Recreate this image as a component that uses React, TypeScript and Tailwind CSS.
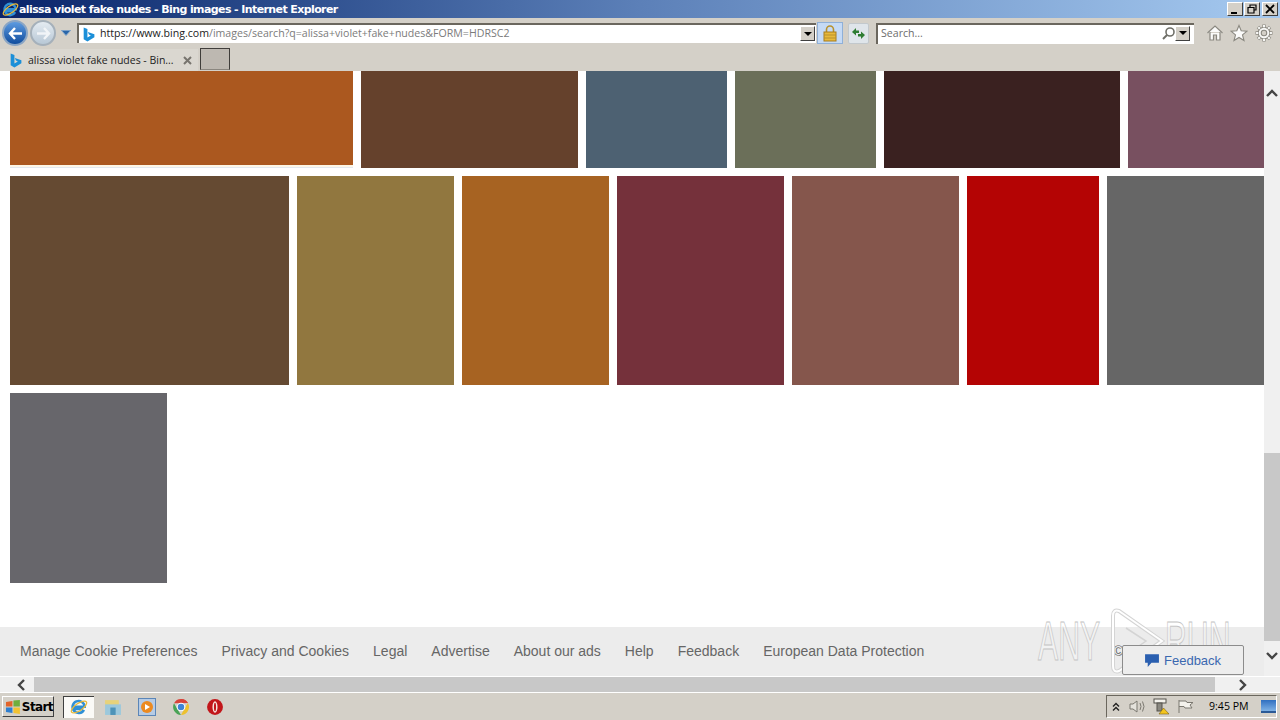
import React from 'react';

const rowOne = [
  { w: 'w-[217px]', c: 'bg-[#65412c]' },
  { w: 'w-[141px]', c: 'bg-[#4d6172]' },
  { w: 'w-[141px]', c: 'bg-[#6b6f59]' },
  { w: 'w-[236px]', c: 'bg-[#3a2120]' },
  { w: 'w-[136px]', c: 'bg-[#785060]' },
];

const rowTwo = [
  { w: 'w-[279px]', c: 'bg-[#654a32]' },
  { w: 'w-[157px]', c: 'bg-[#91773f]' },
  { w: 'w-[147px]', c: 'bg-[#a76322]' },
  { w: 'w-[167px]', c: 'bg-[#75313b]' },
  { w: 'w-[167px]', c: 'bg-[#85564c]' },
  { w: 'w-[132px]', c: 'bg-[#b40404]' },
  { w: 'w-[157px]', c: 'bg-[#666666]' },
];

const footerLinks = [
  'Manage Cookie Preferences',
  'Privacy and Cookies',
  'Legal',
  'Advertise',
  'About our ads',
  'Help',
  'Feedback',
  'European Data Protection',
];

const BingMark = ({ size = 16 }: { size?: number }) => (
  <svg width={size} height={size} viewBox="0 0 14 14">
    <path d="M2.5 0.5 L6 1.8 V9.8 L9.2 8 L7.4 7 L6.4 4.6 L12.5 6.7 V9.6 L6 13.5 L2.5 11.5 Z" fill="#1b8fd8" />
  </svg>
);

const IeLogo = ({ size = 18 }: { size?: number }) => (
  <svg width={size} height={size} viewBox="0 0 18 18">
    <path d="M13.9 11.8 A6 6 0 1 1 14.6 8.8 H4 M4 11 H13" fill="none" stroke="#2f8fd6" strokeWidth="2.6" />
    <ellipse cx="9" cy="9" rx="9" ry="3.6" transform="rotate(-35 9 9)" fill="none" stroke="#e8b93a" strokeWidth="1.3" />
  </svg>
);

const NavButton = ({ active }: { active?: boolean }) => (
  <div className={`w-[26px] h-[26px] rounded-full border-2 flex items-center justify-center bg-gradient-to-b ${active ? 'from-[#5d9be0] to-[#0f4d9e] border-[#8aa5c4]' : 'from-[#e4ebf1] to-[#b8c8d6] border-[#a5b0ba]'}`}>
    <svg width="15" height="13" viewBox="0 0 15 13">
      <path
        d={active ? 'M7 1 L2 6.5 L7 12 M2.5 6.5 H14' : 'M8 1 L13 6.5 L8 12 M12.5 6.5 H1'}
        fill="none"
        stroke={active ? '#ffffff' : '#f1f4f7'}
        strokeWidth="2.4"
      />
    </svg>
  </div>
);

const DropButton = () => (
  <div className="w-[15px] h-[15px] bg-[#d4d0c8] border-t border-l border-t-white border-l-white border-r border-b border-r-[#404040] border-b-[#404040] flex items-center justify-center">
    <div className="w-0 h-0 border-l-[4px] border-r-[4px] border-t-[4px] border-l-transparent border-r-transparent border-t-black" />
  </div>
);

const WinButton = ({ children }: { children: React.ReactNode }) => (
  <div className="w-[16px] h-[14px] bg-[#d4d0c8] border-t border-l border-t-white border-l-white border-r border-b border-r-[#404040] border-b-[#404040] flex items-center justify-center">
    {children}
  </div>
);

const TitleBar = () => (
  <div className="h-[18px] shrink-0 flex items-center justify-between bg-gradient-to-r from-[#0a246a] via-[#5c80b8] to-[#a6caf0] pl-[2px] pr-[2px]">
    <div className="flex items-center">
      <IeLogo size={17} />
      <span className="text-[11px] font-bold text-white leading-none font-['DejaVu_Sans'] tracking-[-0.6px]">alissa violet fake nudes - Bing images - Internet Explorer</span>
    </div>
    <div className="flex items-center">
      <WinButton>
        <div className="w-[6px] h-[2px] bg-black mt-[7px] mr-[2px]" />
      </WinButton>
      <div className="w-[1px]" />
      <WinButton>
        <svg width="10" height="10" viewBox="0 0 10 10">
          <path d="M3 3 V1 H9 V6 H7 M1 3.5 H7 V9 H1 Z" fill="none" stroke="#000" strokeWidth="1.2" />
        </svg>
      </WinButton>
      <div className="w-[2px]" />
      <WinButton>
        <svg width="10" height="10" viewBox="0 0 10 10">
          <path d="M1 1 L9 9 M9 1 L1 9" fill="none" stroke="#000" strokeWidth="1.8" />
        </svg>
      </WinButton>
    </div>
  </div>
);

const Toolbar = () => (
  <div className="h-[30px] shrink-0 bg-[#d4d0c8] flex items-center pl-[2px] relative">
    <NavButton active />
    <div className="ml-[2px]">
      <NavButton />
    </div>
    <svg className="ml-[5px]" width="10" height="6" viewBox="0 0 10 6">
      <path d="M0.5 0.5 H9.5 L5 5.5 Z" fill="#2a66a8" stroke="#7aa0c8" />
    </svg>
    <div className="ml-[6px] w-[739px] h-[20px] bg-white border-t-2 border-l-2 border-t-[#6b675e] border-l-[#6b675e] flex items-center relative">
      <div className="ml-[2px]">
        <BingMark size={15} />
      </div>
      <span className="ml-[4px] -mt-[2px] text-[10.6px] leading-none whitespace-nowrap font-['Open_Sans'] text-[#7b7b7b]">
        <span className="text-[#222222]">https://</span>
        <span className="text-[#222222]">www.bing.com</span>/images/search?q=alissa+violet+fake+nudes&amp;FORM=HDRSC2
      </span>
      <div className="absolute right-[1px] top-[1px]">
        <DropButton />
      </div>
    </div>
    <div className="ml-[1px] w-[26px] h-[22px] bg-[#c5daf5] border border-[#8fb0d8] flex items-center justify-center">
      <svg width="14" height="17" viewBox="0 0 14 17">
        <path d="M3.5 7 V4.5 A3.5 3.5 0 0 1 10.5 4.5 V7" fill="none" stroke="#b8912c" strokeWidth="1.6" />
        <rect x="1" y="7" width="12" height="9" fill="#e8b93a" stroke="#a87d1e" />
        <path d="M1 10 H13 M1 13 H13" stroke="#b8912c" />
      </svg>
    </div>
    <div className="ml-[5px] w-[21px] h-[21px] bg-[#dfe5ea] border border-[#c2c8cc] rounded-[2px] flex items-center justify-center">
      <svg width="15" height="13" viewBox="0 0 15 13">
        <path d="M1 5 L5 1 V3.5 H8 V6 H5 V8.5 Z" fill="#2e7d32" />
        <path d="M14 8 L10 12 V9.5 H7 V7 H10 V4.5 Z" fill="#2e7d32" />
      </svg>
    </div>
    <div className="ml-[7px] w-[318px] h-[21px] bg-white border-t-2 border-l-2 border-t-[#6b675e] border-l-[#6b675e] flex items-center relative">
      <span className="ml-[3px] -mt-[2px] text-[10.6px] leading-none font-['Open_Sans'] text-[#6d6d6d]">Search...</span>
      <svg className="absolute right-[18px] top-[1px]" width="15" height="15" viewBox="0 0 15 15">
        <circle cx="9" cy="6" r="4" fill="none" stroke="#6f6f68" strokeWidth="1.6" />
        <path d="M6 9 L2 13" stroke="#6f6f68" strokeWidth="2" />
      </svg>
      <div className="absolute right-[4px] top-[1px]">
        <DropButton />
      </div>
    </div>
    <svg className="ml-[12px]" width="18" height="18" viewBox="0 0 18 18">
      <path d="M1.5 9 L9 2 L16.5 9 M4 8 V16 H7.5 V11 H10.5 V16 H14 V8" fill="#fbfbfa" stroke="#8a8880" strokeWidth="1.2" />
    </svg>
    <svg className="ml-[6px]" width="18" height="18" viewBox="0 0 18 18">
      <path d="M9 1.5 L11.2 6.8 L17 7.2 L12.5 10.9 L14 16.5 L9 13.5 L4 16.5 L5.5 10.9 L1 7.2 L6.8 6.8 Z" fill="#fbfbfa" stroke="#8a8880" strokeWidth="1.1" />
    </svg>
    <svg className="ml-[7px]" width="18" height="18" viewBox="0 0 17 17">
      <path d="M8.5 0.5 V3 M8.5 14 V16.5 M0.5 8.5 H3 M14 8.5 H16.5 M2.8 2.8 L4.6 4.6 M12.4 12.4 L14.2 14.2 M14.2 2.8 L12.4 4.6 M4.6 12.4 L2.8 14.2" stroke="#8a8880" strokeWidth="3.2" />
      <circle cx="8.5" cy="8.5" r="5.5" fill="#f7f7f5" stroke="#8a8880" strokeWidth="1" />
      <path d="M8.5 1 V3 M8.5 14 V16 M1 8.5 H3 M14 8.5 H16 M3.1 3.1 L4.6 4.6 M12.4 12.4 L13.9 13.9 M13.9 3.1 L12.4 4.6 M4.6 12.4 L3.1 13.9" stroke="#f7f7f5" strokeWidth="2" />
      <circle cx="8.5" cy="8.5" r="2.6" fill="#d4d0c8" stroke="#8a8880" />
    </svg>
  </div>
);

const TabRow = () => (
  <div className="h-[23px] shrink-0 bg-[#d4d0c8] flex items-end">
    <div className="w-[198px] h-[22px] flex items-center pl-[8px] bg-[#dad7d0]">
      <BingMark size={15} />
      <span className="ml-[5px] text-[10.5px] leading-none whitespace-nowrap font-['Open_Sans'] text-[#222222]">alissa violet fake nudes - Bin...</span>
      <svg className="ml-[9px]" width="9" height="9" viewBox="0 0 9 9">
        <path d="M1 1 L8 8 M8 1 L1 8" stroke="#77746e" strokeWidth="2" />
      </svg>
    </div>
    <div className="ml-[2px] mb-[1px] w-[30px] h-[22px] bg-[#bdb8b1] border border-[#3f3d3a] border-b-[#8a867f]" />
  </div>
);

const Tile = ({ w, c, children }: { w: string; c: string; children?: React.ReactNode }) => (
  <div className={`${w} shrink-0 h-full ${c}`}>{children}</div>
);

const Content = () => (
  <div className="flex-1 min-w-0 bg-white overflow-hidden flex flex-col relative">
    <div className="h-[97px] shrink-0 flex gap-[8px] pl-[10px]">
      <div className="w-[343px] shrink-0 h-full bg-[#fdf6e6] border-b border-b-[#e3e9ef]">
        <div className="h-[94px] bg-[#ab581f]" />
      </div>
      {rowOne.map((t) => (
        <Tile key={t.c} w={t.w} c={t.c} />
      ))}
    </div>
    <div className="h-[209px] mt-[8px] shrink-0 flex gap-[8px] pl-[10px]">
      {rowTwo.map((t) => (
        <Tile key={t.c} w={t.w} c={t.c} />
      ))}
    </div>
    <div className="h-[190px] mt-[8px] shrink-0 pl-[10px]">
      <Tile w="w-[157px]" c="bg-[#67666b]" />
    </div>
    <div className="mt-auto h-[49px] shrink-0 bg-[#ececec] flex items-center pl-[20px] pb-[2px] gap-[24px]">
      {footerLinks.map((l) => (
        <span key={l} className="text-[14px] leading-none whitespace-nowrap font-['Liberation_Sans'] text-[#666666]">
          {l}
        </span>
      ))}
      <span className="ml-[165px] text-[14px] leading-none font-['Liberation_Sans'] text-[#666666]">©</span>
    </div>
  </div>
);

const VScrollbar = () => (
  <div className="w-[16px] shrink-0 bg-[#f0f0f0] flex flex-col">
    <div className="h-[44px] shrink-0 flex items-center justify-center">
      <svg width="12" height="8" viewBox="0 0 12 8">
        <path d="M1 7 L6 2 L11 7" fill="none" stroke="#444444" strokeWidth="2.4" />
      </svg>
    </div>
    <div className="flex-1" />
    <div className="h-[188px] shrink-0 bg-[#c8c8c8]" />
    <div className="h-[35px] shrink-0 flex items-start pt-[11px] justify-center">
      <svg width="12" height="8" viewBox="0 0 12 8">
        <path d="M1 1 L6 6 L11 1" fill="none" stroke="#444444" strokeWidth="2.4" />
      </svg>
    </div>
  </div>
);

const HScrollbar = () => (
  <div className="h-[17px] shrink-0 bg-[#f0f0f0] flex border-t border-b border-t-white border-b-white">
    <div className="w-[34px] shrink-0 flex items-center justify-center pl-[8px]">
      <svg width="8" height="12" viewBox="0 0 8 12">
        <path d="M7 1 L2 6 L7 11" fill="none" stroke="#444444" strokeWidth="2.4" />
      </svg>
    </div>
    <div className="w-[1181px] shrink-0 bg-[#c8c8c8]" />
    <div className="flex-1 flex items-center justify-center pr-[9px]">
      <svg width="8" height="12" viewBox="0 0 8 12">
        <path d="M1 1 L6 6 L1 11" fill="none" stroke="#444444" strokeWidth="2.4" />
      </svg>
    </div>
  </div>
);

const Taskbar = () => (
  <div className="h-[27px] shrink-0 bg-[#d4d0c8] flex items-center pl-[2px]">
    <div className="w-[52px] h-[21px] border-t border-l border-t-white border-l-white border-r border-b border-r-[#404040] border-b-[#404040] flex items-center pl-[2px]">
      <svg width="16" height="16" viewBox="0 0 16 16">
        <path d="M1 3 L7.5 2 V7.5 H1 Z" fill="#e2642a" />
        <path d="M8.5 1.5 L15 1 V7.5 H8.5 Z" fill="#6fae3c" />
        <path d="M1 8.5 H7.5 V14 L1 13 Z" fill="#2f7fd0" />
        <path d="M8.5 8.5 H15 V15 L8.5 14 Z" fill="#f2c230" />
      </svg>
      <span className="ml-[1px] text-[12px] font-bold leading-none font-['DejaVu_Sans'] tracking-[-0.6px] text-black">Start</span>
    </div>
    <div className="ml-[9px] w-[31px] h-[22px] bg-[#fbfaf7] border-t border-l border-t-[#404040] border-l-[#404040] flex items-center justify-center">
      <IeLogo size={18} />
    </div>
    <svg className="ml-[10px]" width="18" height="18" viewBox="0 0 17 17">
      <rect x="1" y="2" width="13" height="5" fill="#e7d27a" />
      <rect x="1" y="6" width="15" height="10" fill="#9cc8dc" />
      <rect x="6" y="9" width="5" height="7" fill="#4d93b8" />
    </svg>
    <div className="ml-[16px] w-[18px] h-[18px] bg-[#b6cbe4] border border-[#5b86b8] flex items-center justify-center">
      <div className="w-[12px] h-[12px] rounded-full bg-[#ec8a20] flex items-center justify-center">
        <div className="w-0 h-0 border-t-[3px] border-b-[3px] border-l-[5px] border-t-transparent border-b-transparent border-l-white ml-[1px]" />
      </div>
    </div>
    <svg className="ml-[16px]" width="18" height="18" viewBox="0 0 17 17">
      <path d="M8.5 1 A7.5 7.5 0 0 1 15 4.7 H8.5 Z" fill="#d8433a" />
      <path d="M1.9 5 A7.5 7.5 0 0 1 15 4.7 L8.5 5 Z" fill="#d8433a" />
      <path d="M1.9 5 L5.7 11.5 L8.5 16 A7.5 7.5 0 0 1 1.9 5 Z" fill="#4aa356" />
      <path d="M15 4.7 A7.5 7.5 0 0 1 8.5 16 L11.8 10 Z" fill="#edc12f" />
      <circle cx="8.5" cy="8.5" r="3.6" fill="#3f84d8" stroke="#ffffff" />
    </svg>
    <svg className="ml-[16px]" width="18" height="18" viewBox="0 0 17 17">
      <circle cx="8.5" cy="8.5" r="7.5" fill="#c2161a" />
      <ellipse cx="8.5" cy="8.5" rx="2.4" ry="5.4" fill="#f6e6e0" />
      <ellipse cx="8.5" cy="8.5" rx="1" ry="4" fill="#c2161a" />
    </svg>
    <div className="ml-auto mr-[3px] w-[171px] h-[23px] border-t border-l border-t-[#6b675e] border-l-[#6b675e] border-r border-b border-r-white border-b-white flex items-center pl-[4px]">
      <svg width="10" height="10" viewBox="0 0 10 10">
        <path d="M2 4.5 L5 1.5 L8 4.5 M2 8.5 L5 5.5 L8 8.5" fill="none" stroke="#222" strokeWidth="1.4" />
      </svg>
      <svg className="ml-[8px]" width="17" height="15" viewBox="0 0 17 15">
        <path d="M1 5 H4 L8 2 V13 L4 10 H1 Z" fill="#e4e2dc" stroke="#7b7870" />
        <path d="M11 4 Q13 7.5 11 11 M13.5 2.5 Q16.5 7.5 13.5 12.5" fill="none" stroke="#7b7870" />
      </svg>
      <svg className="ml-[7px]" width="17" height="17" viewBox="0 0 17 17">
        <rect x="1" y="1" width="12" height="4" fill="#f4f2ec" stroke="#55534c" />
        <rect x="4" y="5" width="5" height="8" fill="#8a8880" stroke="#55534c" />
        <path d="M10.5 10 L16 16 H6 Z" fill="#f4c51d" stroke="#7a5f10" strokeWidth="0.6" />
      </svg>
      <svg className="ml-[7px]" width="17" height="15" viewBox="0 0 17 15">
        <path d="M2 14 V1 M2 2 H9 L10 3.5 H16 L13 6 L15 9 H8 L7 7.5 H2" fill="#f4f2ec" stroke="#7b7870" />
      </svg>
      <span className="ml-[15px] text-[10.6px] leading-none font-['Open_Sans'] text-black whitespace-nowrap">9:45 PM</span>
      <div className="ml-[12px] w-[15px] h-[13px] bg-gradient-to-b from-[#2f6fc0] to-[#7fb2e5] border-b-2 border-b-[#2b5a96]" />
    </div>
  </div>
);

const WATERMARK_TEXT =
  "block w-[113px] origin-left scale-x-[0.55] text-[55px] leading-none font-['Liberation_Sans'] [-webkit-text-stroke:1px_#c4c4c4] [-webkit-text-fill-color:rgba(255,255,255,0.35)]";

const Watermark = () => (
  <div className="absolute left-[1038px] top-[608px] h-[66px] flex items-center pointer-events-none">
    <div className="w-[72px] shrink-0 overflow-visible">
      <span className={WATERMARK_TEXT}>ANY</span>
    </div>
    <svg className="shrink-0" width="55" height="66" viewBox="0 0 55 66">
      <path d="M9 3 L52 33 L9 63 Q3 65 3 58 V8 Q3 1 9 3 Z" fill="none" stroke="#d4d4d4" strokeWidth="4" />
      <path d="M9 3 L52 33 L9 63 Q3 65 3 58 V8 Q3 1 9 3 Z" fill="none" stroke="#ffffff" strokeWidth="2" />
      <path d="M16 20 L36 33 L16 47" fill="none" stroke="#d4d4d4" strokeWidth="1.5" />
    </svg>
    <div className="w-[70px] shrink-0 overflow-visible">
      <span className={WATERMARK_TEXT}>RUN</span>
    </div>
  </div>
);

const FeedbackButton = () => (
  <div className="absolute left-[1122px] top-[645px] w-[122px] h-[30px] bg-[#ededed] border border-[#8c8c8c] rounded-[2px] flex items-center pl-[21px]">
    <svg width="16" height="16" viewBox="0 0 15 15">
      <path d="M1 2 H14 V10 H7 L3.5 14 V10 H1 Z" fill="#2a5fb0" />
    </svg>
    <span className="ml-[4px] text-[13px] leading-none font-['Liberation_Sans'] text-[#3b68b0]">Feedback</span>
  </div>
);

export default function App() {
  return (
    <div className="w-[1280px] h-[720px] overflow-hidden relative flex flex-col bg-[#d4d0c8]">
      <TitleBar />
      <Toolbar />
      <TabRow />
      <div className="flex-1 min-h-0 flex">
        <Content />
        <VScrollbar />
      </div>
      <HScrollbar />
      <Taskbar />
      <Watermark />
      <FeedbackButton />
    </div>
  );
}
